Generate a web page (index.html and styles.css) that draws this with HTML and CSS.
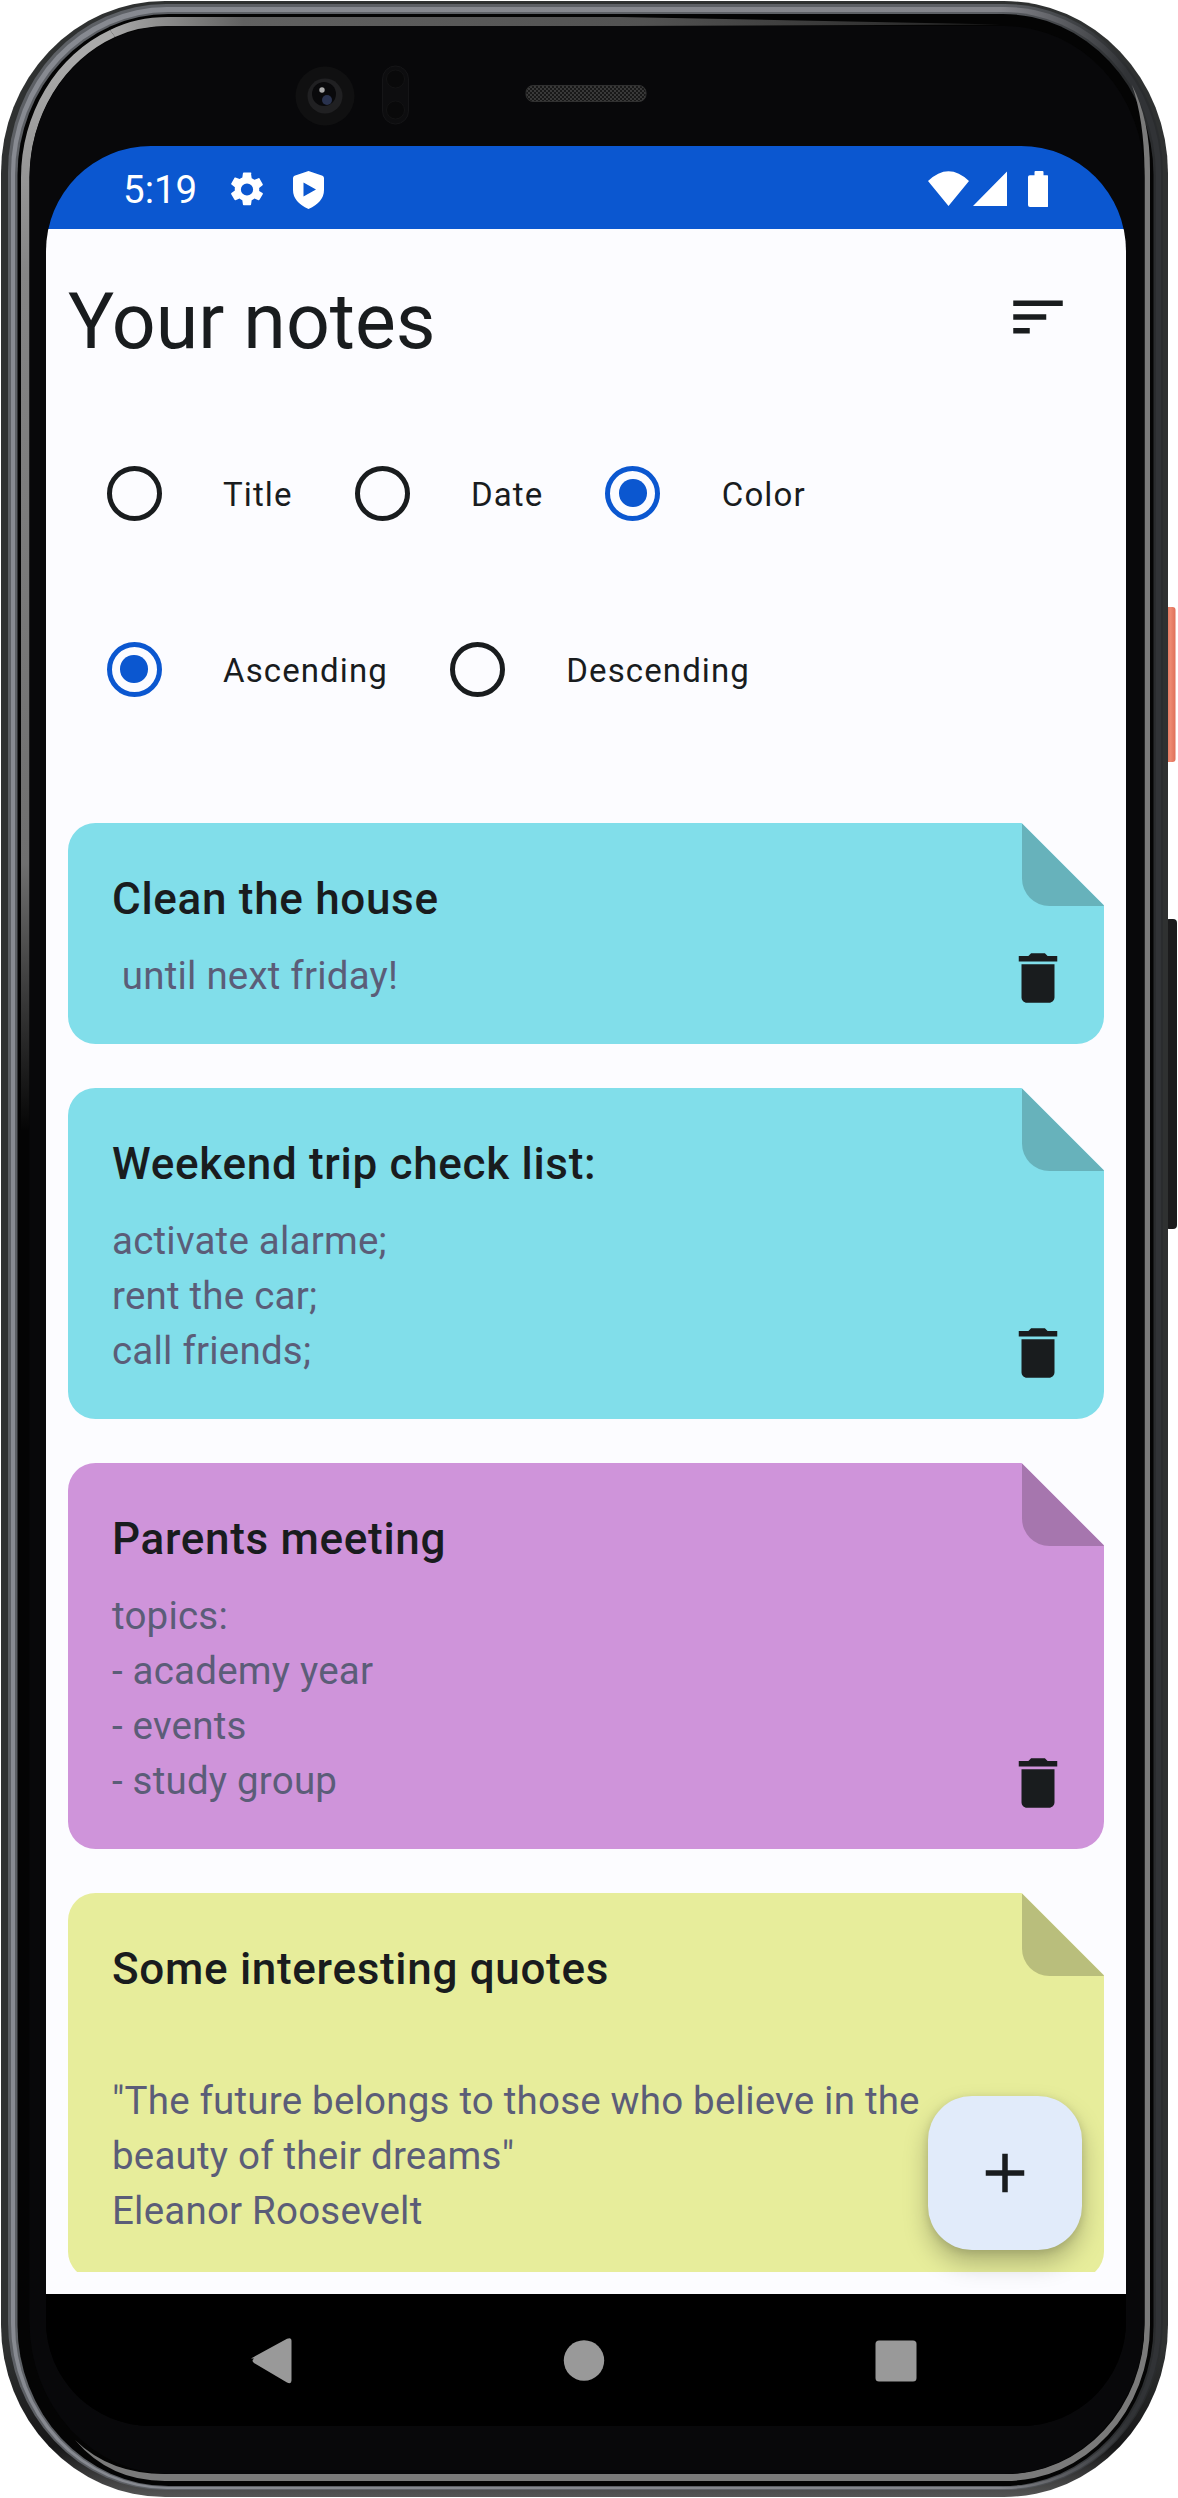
FILE: index.html
```html
<!DOCTYPE html>
<html lang="en">
<head>
<meta charset="utf-8">
<title>Your notes</title>
<link rel="stylesheet" href="styles.css">
</head>
<body>
<div class="device">
  <svg class="bezel" viewBox="0 0 1178 2498" aria-hidden="true">
    <defs>
      <linearGradient id="rim" x1="0" x2="1" y1="0" y2="0">
        <stop offset="0" stop-color="#5d6065"/><stop offset=".86" stop-color="#5d6065"/><stop offset=".97" stop-color="#2a2c2e"/>
      </linearGradient>
      <linearGradient id="rimLight" x1="0" x2="1" y1="0" y2="0">
        <stop offset="0" stop-color="#878a91"/><stop offset=".86" stop-color="#84858b"/><stop offset=".97" stop-color="#313336"/>
      </linearGradient>
      <linearGradient id="glint" gradientUnits="userSpaceOnUse" x1="0" y1="60" x2="0" y2="1130">
        <stop offset="0" stop-color="#a9a9a9"/><stop offset=".2" stop-color="#858585"/><stop offset=".75" stop-color="#6f6f6f"/><stop offset="1" stop-color="#050505"/>
      </linearGradient>
      <linearGradient id="glintTop" gradientUnits="userSpaceOnUse" x1="110" y1="0" x2="1000" y2="0">
        <stop offset="0" stop-color="#a9a9a9"/><stop offset=".15" stop-color="#616161"/><stop offset=".6" stop-color="#525252"/><stop offset="1" stop-color="#222"/>
      </linearGradient>
      <linearGradient id="edge" x1="0" x2="0" y1="0" y2="1">
        <stop offset="0" stop-color="#2f3131"/><stop offset=".94" stop-color="#2f3131"/><stop offset=".98" stop-color="#161617"/><stop offset="1" stop-color="#555"/>
      </linearGradient>
      <linearGradient id="power" x1="0" x2="1" y1="0" y2="0">
        <stop offset="0" stop-color="#d8634c"/><stop offset=".5" stop-color="#ee8a72"/><stop offset="1" stop-color="#e0705a"/>
      </linearGradient>
      <pattern id="mesh" width="4" height="4" patternUnits="userSpaceOnUse">
        <rect width="4" height="4" fill="#181818"/><circle cx="1" cy="1" r=".9" fill="#484848"/><circle cx="3" cy="3" r=".9" fill="#484848"/>
      </pattern>
    </defs>
    <rect x="1165" y="607" width="10.5" height="155" rx="3" fill="url(#power)"/>
    <rect x="1165" y="919" width="12" height="310" rx="4" fill="#1b1b1c"/>
    <rect x="1" y="1" width="1167" height="2496" rx="164" ry="172" fill="url(#edge)"/>
    <rect x="8" y="4" width="1155" height="2486" rx="158" ry="168" fill="url(#rim)"/>
    <rect x="11" y="7" width="1150" height="2482" rx="156" ry="166" fill="url(#rimLight)"/>
    <rect x="15" y="12" width="1141" height="2475" rx="153" ry="163" fill="url(#rim)"/>
    <rect x="17.5" y="14" width="1136" height="2472" rx="151" ry="161" fill="#040404"/>
    <path d="M21 1130V178A147 161 0 0 1 110 30L115 37A138 152 0 0 0 29.500 178V1130Z" fill="url(#glint)"/>
    <path d="M110 30Q136 17 168 17H620L1000 24.500 620 26H168Q138 26 115 37Z" fill="url(#glintTop)"/>
    <path d="M1144.500 170V2325A138 149 0 0 1 1006 2474H165Q110 2474 75 2440 110 2481 165 2481H1006A144 156 0 0 0 1150 2325V170Q1150 120 1132 85 1144 120 1144.500 170Z" fill="#7a7a7a"/>
    <rect x="29.500" y="26" width="1115" height="2448" rx="140" ry="152" fill="#08080a"/>
    <circle cx="325" cy="96" r="29.500" fill="#101011"/>
    <circle cx="325" cy="96" r="17.500" fill="#202022"/>
    <circle cx="324" cy="94" r="12" fill="#09090b"/>
    <circle cx="327" cy="100" r="5" fill="#29324e"/>
    <circle cx="322" cy="90" r="2.700" fill="#aaa"/>
    <rect x="382.500" y="66" width="26" height="58" rx="13" fill="#0d0d0f" stroke="#151517"/>
    <circle cx="395.500" cy="79" r="9" fill="#09090a" stroke="#131314"/>
    <circle cx="395.500" cy="110" r="9" fill="#09090a" stroke="#131314"/>
    <rect x="526" y="85.500" width="120" height="16" rx="7" fill="url(#mesh)" stroke="#303030"/>
  </svg>

  <div class="screen">
    <header class="status-bar">
      <span class="clock">5:19</span>
      <svg class="status-gear" viewBox="2 2 20 20"><path d="M19.140 12.940c.04-.3.06-.61.06-.94s-.02-.64-.07-.94l2.030-1.580c.18-.14.23-.41.12-.61l-1.920-3.320c-.12-.22-.37-.29-.59-.22l-2.390.96c-.5-.38-1.030-.7-1.620-.94l-.36-2.540A.48.48 0 0 0 13.920 2h-3.840c-.24 0-.43.17-.47.41l-.36 2.540c-.59.24-1.130.57-1.620.94l-2.390-.96c-.22-.08-.47 0-.59.22L2.740 8.470c-.12.21-.08.47.12.61l2.030 1.580c-.05.3-.09.63-.09.94s.02.64.07.94l-2.030 1.580c-.18.14-.23.41-.12.61l1.920 3.320c.12.22.37.29.59.22l2.390-.96c.5.38 1.030.7 1.620.94l.36 2.540c.05.24.24.41.48.41h3.840c.24 0 .44-.17.47-.41l.36-2.540c.59-.24 1.130-.56 1.620-.94l2.390.96c.22.08.47 0 .59-.22l1.920-3.320c.12-.22.07-.47-.12-.61zM12 15.600a3.600 3.600 0 1 1 0-7.200 3.600 3.600 0 0 1 0 7.200z"/></svg>
      <svg class="status-shield" viewBox="0 0 31 38"><path fill-rule="evenodd" d="M15.500 0 29.500 4.800Q31 5.500 31 7V19Q31 31 15.500 38 0 31 0 19V7Q0 5.500 1.500 4.800ZM10.500 11.500V25.500L23 18.500Z"/></svg>
      <svg class="status-signals" viewBox="0 0 120 38"><path d="M0 10Q20.500-9.500 41 10L20.500 35ZM79 .5V35H45ZM107.500 0h7a1 1 0 0 1 1 1v3.200h3.500a1.800 1.800 0 0 1 1.800 1.800v28a2 2 0 0 1-2 2H102a2 2 0 0 1-2-2V6a1.800 1.800 0 0 1 1.800-1.800h4.700V1a1 1 0 0 1 1-1z"/></svg>
    </header>

    <main class="content">
      <div class="heading">
        <h1>Your notes</h1>
        <button class="icon-button" aria-label="Sort"><svg viewBox="0 0 24 24"><path d="M3 18h6v-2H3v2zM3 6v2h18V6H3zm0 7h12v-2H3v2z"/></svg></button>
      </div>

      <div class="options">
        <div class="option-row">
          <i class="radio"></i><span>Title</span>
          <i class="radio"></i><span>Date</span>
          <i class="radio on"></i><span>Color</span>
        </div>
        <div class="option-row">
          <i class="radio on"></i><span>Ascending</span>
          <i class="radio"></i><span>Descending</span>
        </div>
      </div>

      <div class="notes">
        <article class="note blue">
          <h2>Clean the house</h2>
          <p> until next friday!</p>
          <button class="icon-button delete" aria-label="Delete"><svg viewBox="0 0 24 24"><path d="M6 19c0 1.100.9 2 2 2h8c1.100 0 2-.9 2-2V7H6v12zM19 4h-3.500l-1-1h-5l-1 1H5v2h14V4z"/></svg></button>
        </article>
        <article class="note blue">
          <h2>Weekend trip check list:</h2>
          <p>activate alarme;
rent the car;
call friends;</p>
          <button class="icon-button delete" aria-label="Delete"><svg viewBox="0 0 24 24"><path d="M6 19c0 1.100.9 2 2 2h8c1.100 0 2-.9 2-2V7H6v12zM19 4h-3.500l-1-1h-5l-1 1H5v2h14V4z"/></svg></button>
        </article>
        <article class="note violet">
          <h2>Parents meeting</h2>
          <p>topics:
- academy year
- events
- study group</p>
          <button class="icon-button delete" aria-label="Delete"><svg viewBox="0 0 24 24"><path d="M6 19c0 1.100.9 2 2 2h8c1.100 0 2-.9 2-2V7H6v12zM19 4h-3.500l-1-1h-5l-1 1H5v2h14V4z"/></svg></button>
        </article>
        <article class="note lime">
          <h2>Some interesting quotes</h2>
          <p class="spaced">"The future belongs to those who believe in the
beauty of their dreams"
Eleanor Roosevelt</p>
        </article>
      </div>
      <button class="fab" aria-label="Add note"><svg viewBox="0 0 24 24"><path d="M19 13h-6v6h-2v-6H5v-2h6V5h2v6h6v2z"/></svg></button>
    </main>

    <nav class="nav-bar">
      <svg viewBox="0 0 46 46"><path d="M2 20.500 38 .8Q42.500-1 42.500 3V42.500Q42.500 46.500 38 44.500L5 25Q2 22.800 5 20.500Z"/></svg>
      <svg viewBox="0 0 46 46"><circle cx="23" cy="22.500" r="20.200"/></svg>
      <svg viewBox="0 0 46 46"><rect x="2.500" y="2.500" width="41" height="41" rx="3.500"/></svg>
    </nav>
  </div>
</div>
</body>
</html>
```
FILE: styles.css
```css
*, *::before, *::after { box-sizing: border-box; }
body { margin: 0; background: #fff; font-family: Roboto, "Liberation Sans", sans-serif; color: #191c1e; }
h1, h2, p { margin: 0; }
button { border: 0; padding: 0; background: none; color: inherit; }
svg { display: block; fill: currentColor; }

.device { position: relative; width: 1178px; height: 2498px; padding: 146px 52px 72px 46px; overflow: hidden; }
.bezel { position: absolute; left: 0; top: 0; width: 1178px; height: 2498px; }
.screen { position: relative; display: flex; flex-direction: column; width: 1080px; height: 2280px; border-radius: 105px; overflow: hidden; background: #000; }

.status-bar { display: flex; flex: none; height: 83px; padding: 25px 78px 0 77px; background: #0b57d0; color: #fff; }
.clock { width: 107px; font-size: 38.5px; line-height: 38px; }
.status-gear { width: 34px; height: 35px; margin-top: 1px; }
.status-shield { width: 31px; height: 38px; margin-left: 29px; }
.status-signals { width: 120px; height: 38px; margin-left: auto; }

.content { position: relative; display: flex; flex: 1; flex-direction: column; min-height: 0; padding: 22px; background: #fcfcff; }
.heading { display: flex; align-items: center; justify-content: space-between; height: 132px; }
h1 { padding-top: 10px; font-size: 77px; font-weight: 400; line-height: 99px; }
.icon-button { display: grid; place-items: center; width: 132px; height: 132px; }
.icon-button svg, .fab svg { width: 66px; height: 66px; }

.options { display: flex; flex-direction: column; gap: 44px; padding: 44px 0 88px; }
.option-row { display: flex; align-items: center; gap: 22px; height: 132px; }
.option-row span { padding: 4px 1.5px 0 1px; font-size: 33px; line-height: 44px; letter-spacing: 1.1px; }
.radio { display: grid; place-items: center; width: 132px; height: 132px; }
.radio::before { content: ""; grid-area: 1 / 1; width: 55px; height: 55px; border: 5.5px solid #191c1e; border-radius: 50%; }
.radio.on::before { border-color: #0b57d0; }
.radio.on::after { content: ""; grid-area: 1 / 1; width: 27.5px; height: 27.5px; border-radius: 50%; background: #0b57d0; }

.notes { display: flex; flex: 1; flex-direction: column; gap: 44px; min-height: 0; overflow: hidden; }
.note { --paper: #81deea; --fold: #67b2bb; position: relative; flex: none; min-height: 221px; padding: 43px 44px 41px; border-radius: 27.5px; background: var(--paper); clip-path: polygon(0 0, calc(100% - 82.5px) 0, 100% 82.5px, 100% 100%, 0 100%); }
.note::before { content: ""; position: absolute; top: 0; right: 0; width: 82.5px; height: 82.5px; border-bottom-left-radius: 27.5px; background: var(--fold); }
.note.violet { --paper: #cf94da; --fold: #a676ae; }
.note.lime { --paper: #e7ed9b; --fold: #b9be7c; }
.note h2 { font-size: 44px; font-weight: 500; line-height: 66px; letter-spacing: .69px; }
.note p { margin-top: 16px; color: #5b5d78; font-size: 38.5px; line-height: 55px; letter-spacing: .21px; white-space: pre-wrap; }
.note p.spaced { padding-top: 55px; }
.delete { position: absolute; right: 0; bottom: 0; }
.fab { position: absolute; right: 44px; bottom: 44px; display: grid; place-items: center; width: 154px; height: 154px; border-radius: 44px; background: #e1ebfa; box-shadow: 0 13px 24px rgba(0, 0, 0, .25), 0 2px 8px rgba(0, 0, 0, .12); }

.nav-bar { display: flex; flex: none; justify-content: space-between; height: 132px; padding: 43.5px 207px 0 203px; background: #000; color: #999; }
.nav-bar svg { width: 46px; height: 46px; }
```
